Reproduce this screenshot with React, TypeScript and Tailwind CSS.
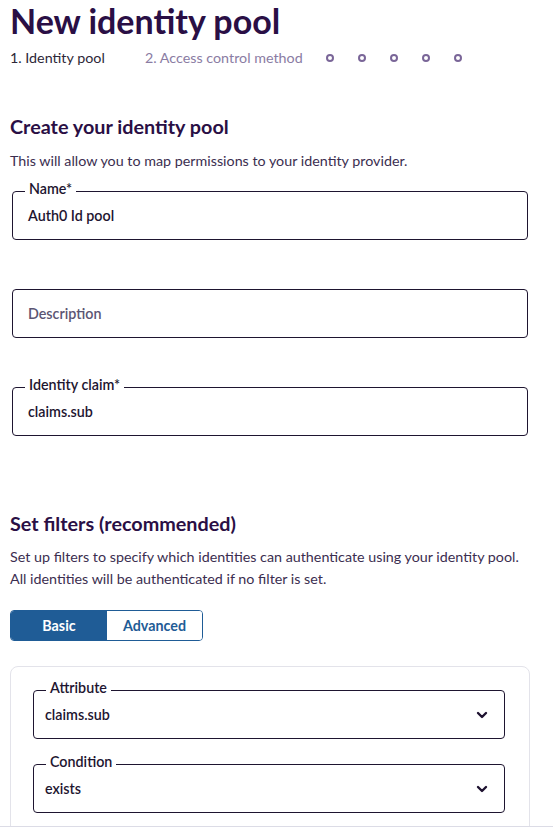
import React from "react";

const font = { fontFamily: 'Lato, "Noto Sans", sans-serif' };

function Chevron() {
  return (
    <svg width="12" height="8" viewBox="0 0 12 8" fill="none" stroke="#1e1230" strokeWidth="2.4" strokeLinecap="round" strokeLinejoin="round">
      <path d="M2 2l4 4 4-4" />
    </svg>
  );
}

function Field({ label, value, placeholder, select }: { label?: string; value?: string; placeholder?: string; select?: boolean }) {
  return (
    <div
      className={
        select
          ? "relative h-[49px] rounded-[4px] border border-[#1e1530] flex items-center justify-between pl-[11px] pr-[16px]"
          : "relative h-[49px] rounded-[4px] border border-[#1e1530] flex items-center justify-between pl-[15px] pr-[15px]"
      }
    >
      {label && (
        <span
          className={
            select
              ? "absolute -top-[13px] left-[12px] bg-white px-[4px] text-[14.3px] font-semibold leading-[20px] text-[#1e1530]"
              : "absolute -top-[13px] left-[12px] bg-white px-[4px] text-[14.3px] font-semibold leading-[20px] text-[#1e1530]"
          }
        >
          {label}
        </span>
      )}
      {value ? (
        <span className="text-[14.3px] font-semibold text-[#1e1530]">{value}</span>
      ) : (
        <span className="text-[14.3px] font-semibold text-[#5b5573]">{placeholder}</span>
      )}
      {select && <Chevron />}
    </div>
  );
}

export default function App() {
  return (
    <div className="h-[839px] w-[553px] flex flex-col bg-white overflow-hidden" style={font}>
      <div className="flex-1 overflow-hidden pl-[10px] pr-[23px]">
        <h1 className="mt-[1px] text-[34px] font-bold leading-[40px] text-[#2a0f45]">New identity pool</h1>
        <div className="mt-[7px] flex items-center text-[14.3px] leading-[20px]">
          <span className="w-[135px] text-[#2d2738]">1. Identity pool</span>
          <span className="w-[181px] text-[#8a7ca3]">2. Access control method</span>
          <div className="flex items-center gap-[24px]">
            {[0, 1, 2, 3, 4].map((i) => (
              <span key={i} className="block h-[8px] w-[8px] rounded-full border-2 border-[#7a6698]" />
            ))}
          </div>
        </div>

        <h2 className="mt-[45px] text-[19.8px] font-bold leading-[26px] text-[#2a0f45]">Create your identity pool</h2>
        <p className="mt-[11px] text-[14.3px] leading-[22px] text-[#3b2e50]">This will allow you to map permissions to your identity provider.</p>

        <div className="mt-[19px] mx-[2px] flex flex-col gap-[49px]">
          <Field label="Name*" value="Auth0 Id pool" />
          <Field placeholder="Description" />
          <Field label="Identity claim*" value="claims.sub" />
        </div>

        <h2 className="mt-[74px] text-[19.8px] font-bold leading-[26px] text-[#2a0f45]">Set filters (recommended)</h2>
        <p className="mt-[10px] text-[14.3px] leading-[22px] text-[#3b2e50]">
          Set up filters to specify which identities can authenticate using your identity pool.
          <br />
          All identities will be authenticated if no filter is set.
        </p>

        <div className="mt-[20px] flex h-[31px] w-[193px] overflow-hidden rounded-[4px] border border-[#1f5c96] text-[14.3px] font-bold">
          <div className="flex w-[96px] items-center justify-center bg-[#1f5c96] text-white">Basic</div>
          <div className="flex flex-1 items-center justify-center bg-white text-[#1f5c96]">Advanced</div>
        </div>

        <div className="mt-[25px] rounded-[8px] border border-[#e3e3ea] pt-[23px] pb-[23px] pl-[22px] pr-[24px] flex flex-col gap-[25px]">
          <Field label="Attribute" value="claims.sub" select />
          <Field label="Condition" value="exists" select />
          <div className="h-[60px]" />
        </div>
      </div>
      <div className="h-[13px] shrink-0 border-t border-[#dcdce6] bg-white" />
    </div>
  );
}
